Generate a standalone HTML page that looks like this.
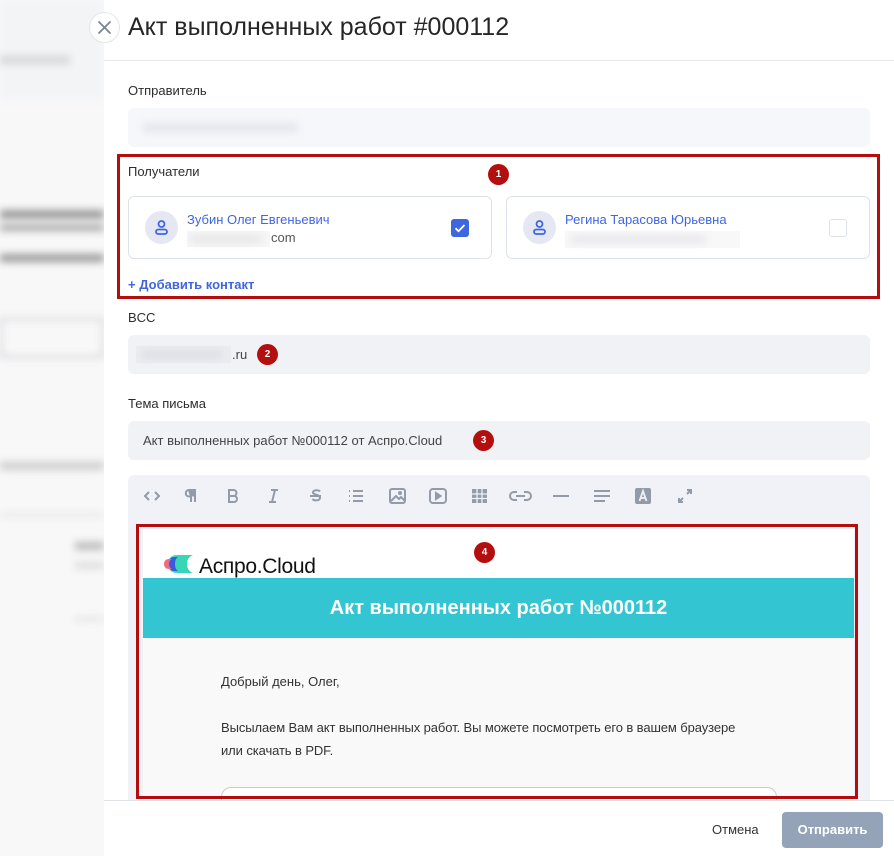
<!DOCTYPE html>
<html><head><meta charset="utf-8"><style>
*{box-sizing:border-box;margin:0;padding:0}
body{width:894px;height:856px;overflow:hidden;position:relative;font-family:"Liberation Sans",sans-serif;background:#f7f7f8}
.abs{position:absolute}
.bg{left:0;top:0;width:104px;height:856px;background:#f8f8f9;overflow:hidden}
.blur{filter:blur(4px);position:absolute}
.panel{left:104px;top:0;width:790px;height:856px;background:#fff}
.lbl{font-size:13px;color:#2d2d2d;position:absolute;left:128px}
.inp{position:absolute;left:128px;width:742px;height:39px;background:#f1f2f6;border-radius:6px;font-size:13px;color:#444}
.card{position:absolute;top:196px;height:63px;border:1px solid #dde2ea;border-radius:6px;background:#fff}
.av{position:absolute;left:16px;top:14px;width:33px;height:33px;border-radius:50%;background:#e5e8f3}
.name{position:absolute;left:58px;top:15px;font-size:13px;color:#3e66df}
.badge{position:absolute;width:21px;height:21px;border-radius:50%;background:#b30f0f;color:#fff;font-size:10px;font-weight:bold;text-align:center;line-height:21px}
</style></head><body>
<div class="abs bg">
 <div class="blur" style="left:0;top:0;width:104px;height:100px;background:#f3f4f6"></div>
 <div class="blur" style="left:0;top:56px;width:70px;height:8px;background:#d5d5d8"></div>
 <div class="blur" style="left:0;top:210px;width:104px;height:9px;background:#999"></div>
 <div class="blur" style="left:0;top:224px;width:104px;height:7px;background:#aaa"></div>
 <div class="blur" style="left:0;top:254px;width:104px;height:8px;background:#999"></div>
 <div class="blur" style="left:0;top:318px;width:104px;height:40px;border:2px solid #c8c8cb"></div>
 <div class="blur" style="left:0;top:462px;width:104px;height:8px;background:#ccc"></div>
 <div class="blur" style="left:0;top:514px;width:104px;height:2px;background:#d5d5d5"></div>
 <div class="blur" style="left:75px;top:542px;width:29px;height:8px;background:#bbb"></div>
 <div class="blur" style="left:75px;top:562px;width:29px;height:7px;background:#ddd"></div>
 <div class="blur" style="left:75px;top:618px;width:29px;height:2px;background:#ccc"></div>
</div>
<div class="abs panel"></div>
<div class="abs" style="left:89px;top:12px;width:31px;height:31px;border-radius:50%;background:#fff;border:1px solid #e2e5ea"><svg width="29" height="29" viewBox="0 0 29 29"><path d="M9 9L20 20M20 9L9 20" stroke="#7c8594" stroke-width="1.8" stroke-linecap="round"/></svg></div>
<div class="abs" style="left:128px;top:13px;font-size:25px;color:#262626">Акт выполненных работ #000112</div>
<div class="abs" style="left:104px;top:60px;width:790px;height:1px;background:#e6e8ed"></div>

<div class="lbl" style="top:83px">Отправитель</div>
<div class="inp" style="top:108px;background:#f6f7fb"><div class="blur" style="left:15px;top:15px;width:155px;height:9px;background:#e3e5ec"></div></div>

<div class="abs" style="left:117px;top:154px;width:763px;height:145px;border:3px solid #b50d0d"></div>
<div class="lbl" style="top:164px">Получатели</div>
<div class="badge" style="left:488px;top:164px">1</div>
<div class="card" style="left:128px;width:364px">
 <div class="av"><svg width="33" height="33" viewBox="0 0 33 33"><circle cx="16.5" cy="13" r="3" fill="none" stroke="#3e66df" stroke-width="1.8"/><rect x="11" y="18.5" width="11" height="4.5" rx="2.2" fill="none" stroke="#3e66df" stroke-width="1.8"/></svg></div>
 <div class="name">Зубин Олег Евгеньевич</div>
 <div class="abs" style="left:58px;top:34px;width:83px;height:16px;background:#f6f6f7"><div class="blur" style="left:4px;top:5px;width:70px;height:6px;background:#e2e2e4"></div></div>
 <div class="abs" style="left:142px;top:33px;font-size:13px;color:#555">com</div>
 <div class="abs" style="left:322px;top:22px;width:18px;height:18px;border-radius:3px;background:#3e66df"><svg width="18" height="18"><path d="M4.5 9.2l3 3 6-6.2" stroke="#fff" stroke-width="1.8" fill="none"/></svg></div>
</div>
<div class="card" style="left:506px;width:364px">
 <div class="av"><svg width="33" height="33" viewBox="0 0 33 33"><circle cx="16.5" cy="13" r="3" fill="none" stroke="#3e66df" stroke-width="1.8"/><rect x="11" y="18.5" width="11" height="4.5" rx="2.2" fill="none" stroke="#3e66df" stroke-width="1.8"/></svg></div>
 <div class="name">Регина Тарасова Юрьевна</div>
 <div class="abs" style="left:58px;top:34px;width:175px;height:17px;background:#f8f8f9"><div class="blur" style="left:6px;top:5px;width:135px;height:7px;background:#e6e6e9"></div></div>
 <div class="abs" style="left:322px;top:22px;width:18px;height:18px;border-radius:3px;border:1px solid #dde2ea"></div>
</div>
<div class="abs" style="left:128px;top:277px;font-size:13px;color:#3e66df;font-weight:bold">+ Добавить контакт</div>

<div class="lbl" style="top:310px">BCC</div>
<div class="inp" style="top:335px"><div class="abs" style="left:8px;top:11px;width:95px;height:17px;background:#ebecf0"><div class="blur" style="left:6px;top:5px;width:80px;height:7px;background:#dcdde2"></div></div><div class="abs" style="left:104px;top:12px">.ru</div></div>
<div class="badge" style="left:257px;top:344px">2</div>

<div class="lbl" style="top:396px">Тема письма</div>
<div class="inp" style="top:421px"><div class="abs" style="left:15px;top:12px">Акт выполненных работ №000112 от Аспро.Cloud</div></div>
<div class="badge" style="left:473px;top:430px">3</div>

<div class="abs" style="left:128px;top:475px;width:742px;height:330px;background:#f0f2f7;border-radius:6px"></div>
<svg class="abs" style="left:130px;top:484px" width="580" height="24" viewBox="130 484 580 24" fill="none" stroke="#939aa8" stroke-width="2">
 <path d="M149 492l-4 4 4 4M155 492l4 4-4 4"/>
 <path d="M191 490v12M195 490v12M196 490h-7a3.2 3.2 0 0 0 0 6.5h2" /><path d="M188 490h7v6.5h-5z" fill="#939aa8" stroke="none"/>
 <path d="M229 490v12h5a3 3 0 0 0 0-6h-5h4.5a3 3 0 0 0 0-6z"/>
 <path d="M271 490h7M269 502h7M275 490l-3 12"/>
 <path d="M310 496h11M320 491.5c-1-1.6-6-2-7 .5-1 3 7 2 7 6-.5 3-6 3-7.5 1"/>
 <path d="M349 491h1M349 496h1M349 501h1M353 491h10M353 496h10M353 501h10"/>
 <rect x="390" y="489" width="15" height="14" rx="2"/><path d="M391 501l5-5 3 3 2-2 4 4"/><circle cx="400" cy="493" r="1"/>
 <rect x="430" y="489" width="16" height="14" rx="3"/><path d="M436 493v6l4.5-3z" fill="#939aa8"/>
 <rect x="472" y="489" width="15" height="14" fill="#939aa8" stroke="none"/><path d="M472 494h15M472 498.5h15M477 489v14M482 489v14" stroke="#f0f2f7" stroke-width="1.3"/>
 <path d="M517 492h-3a4 4 0 0 0 0 8h3M524 492h3a4 4 0 0 1 0 8h-3M516 496h9"/>
 <path d="M553 496h16"/>
 <path d="M594 491h16M594 496h16M594 501h11"/>
 <rect x="635" y="488" width="16" height="16" rx="2" fill="#939aa8" stroke="none"/><path d="M639.5 501l3.5-10 3.5 10M640.5 498h5" stroke="#f0f2f7" stroke-width="1.8"/>
 <path d="M687 490h4v4M691 490l-4 4M679 498v4h4M679 502l4-4"/>
</svg>

<div class="abs" style="left:143px;top:529px;width:711px;height:271px;background:#f9f9f9;overflow:hidden">
 <div class="abs" style="left:0;top:0;width:711px;height:49px;background:#fff"></div>
 <svg class="abs" style="left:20px;top:24px" width="36" height="22" viewBox="0 0 36 22"><path d="M14 2h16c-5 2-6 6-6 9s1 7 6 9H14c-6 0-9-4-9-9s3-9 9-9z" fill="#39d6b5"/><path d="M12 4h3c-4 2-4 12 0 14h-3c-5 0-7-3-7-7s2-7 7-7z" fill="#3a5ae0"/><path d="M6 6h3c-4 2-4 8 0 10H6c-3 0-5-2-5-5s2-5 5-5z" fill="#f06a7e"/></svg>
 <div class="abs" style="left:56px;top:26px;font-size:21px;color:#111;letter-spacing:-0.3px">Аспро.Cloud</div>
 <div class="abs" style="left:0;top:49px;width:711px;height:60px;background:#33c5d1;color:#fff;font-size:20px;font-weight:bold;text-align:center;line-height:60px">Акт выполненных работ №000112</div>
 <div class="abs" style="left:78px;top:145px;font-size:13px;color:#333">Добрый день, Олег,</div>
 <div class="abs" style="left:78px;top:187px;font-size:13px;color:#333;line-height:23px;width:600px;letter-spacing:-0.1px">Высылаем Вам акт выполненных работ. Вы можете посмотреть его в вашем браузере<br>или скачать в PDF.</div>
 <div class="abs" style="left:78px;top:258px;width:556px;height:40px;border:1px solid #c8ccd4;border-radius:10px;background:#fff"></div>
</div>
<div class="abs" style="left:136px;top:524px;width:722px;height:275px;border:3px solid #b50d0d"></div>
<div class="badge" style="left:474px;top:542px">4</div>

<div class="abs" style="left:104px;top:800px;width:790px;height:56px;background:#fff;border-top:1px solid #dfe2e7"></div>
<div class="abs" style="left:712px;top:822px;font-size:13px;color:#333">Отмена</div>
<div class="abs" style="left:782px;top:812px;width:101px;height:36px;background:#94a3b8;border-radius:4px;color:#fff;font-size:13px;font-weight:bold;text-align:center;line-height:36px">Отправить</div>
</body></html>
